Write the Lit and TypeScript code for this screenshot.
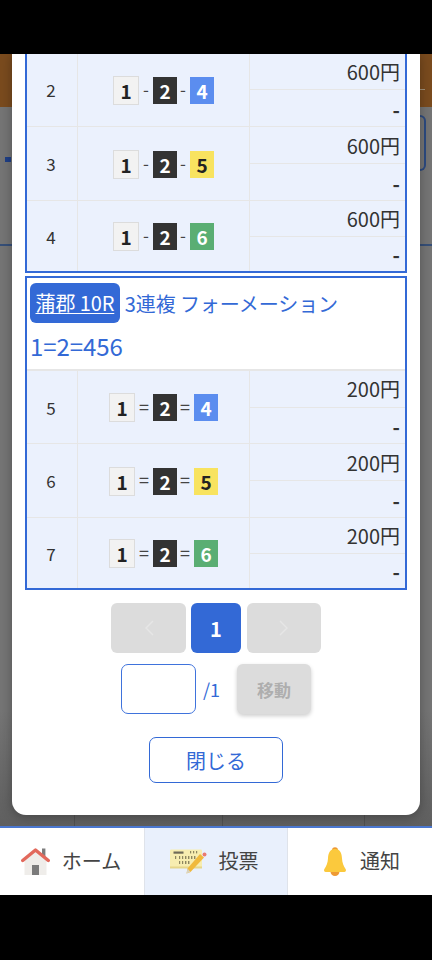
import { LitElement, html, css, svg } from "lit";
import { customElement } from "lit/decorators.js";

type Row = { no: number; nums: number[]; sep: string; amount: string; h: number };

const group1: Row[] = [
  { no: 2, nums: [1, 2, 4], sep: "-", amount: "600円", h: 73 },
  { no: 3, nums: [1, 2, 5], sep: "-", amount: "600円", h: 74 },
  { no: 4, nums: [1, 2, 6], sep: "-", amount: "600円", h: 71 },
];
const group2: Row[] = [
  { no: 5, nums: [1, 2, 4], sep: "=", amount: "200円", h: 73 },
  { no: 6, nums: [1, 2, 5], sep: "=", amount: "200円", h: 74 },
  { no: 7, nums: [1, 2, 6], sep: "=", amount: "200円", h: 71 },
];

const homeIcon = svg`<svg width="29" height="27" viewBox="0 0 29 27">
  <rect x="21" y="0.5" width="3.4" height="9" fill="#7d7d7d"/>
  <path d="M3.5 11 L14.5 3 L25.5 11 V27 H3.5 Z" fill="#efedea"/>
  <path d="M1.7 12.5 L14.5 2 L27.3 12.5" fill="none" stroke="#e2695c" stroke-width="3.4" stroke-linejoin="round" stroke-linecap="round"/>
  <rect x="11" y="17" width="7" height="10" fill="#7b7b7b"/>
</svg>`;

const ticketIcon = svg`<svg width="37" height="25" viewBox="0 0 37 25">
  <rect x="0" y="0.5" width="32" height="18.5" rx="1.2" fill="#f7edb0"/>
  <rect x="0" y="17.5" width="32" height="2" fill="#e6d68a"/>
  <rect x="3.5" y="2.5" width="10" height="2.2" fill="#6f6b58"/>
  <g fill="#8d8660">
    <rect x="5" y="7" width="1.2" height="3"/><rect x="9" y="7" width="1.2" height="3"/><rect x="12" y="7" width="1.2" height="3"/>
    <rect x="15" y="7" width="1.4" height="3"/><rect x="18" y="7" width="1.4" height="3"/><rect x="21" y="7" width="1.4" height="3"/><rect x="24" y="7" width="1.4" height="3"/>
    <rect x="9" y="12" width="1.2" height="3"/><rect x="12" y="12" width="1.2" height="3"/><rect x="15" y="12" width="1.4" height="3"/><rect x="18" y="12" width="1.4" height="3"/>
    <rect x="20" y="2" width="1.2" height="2.4"/><rect x="23" y="2" width="1.2" height="2.4"/><rect x="26" y="2" width="1.2" height="2.4"/>
  </g>
  <path d="M30 5 L34 8.5 L20.5 23 L16.5 24.5 L17.5 19.5 Z" fill="#f0b93c"/>
  <path d="M17.5 19.5 L16.5 24.5 L20.5 23 Z" fill="#d9d3bf"/>
  <circle cx="34.5" cy="5.5" r="2" fill="#ea7a70"/>
</svg>`;

const bellIcon = svg`<svg width="24" height="29" viewBox="0 0 24 29">
  <circle cx="12" cy="3.2" r="3" fill="#ee9a34"/>
  <path d="M7.5 24.5 a4.5 4.5 0 0 0 9 0 Z" fill="#ee9a34"/>
  <path d="M12 2 C6.5 2 5.2 7 5 11.5 C4.8 16 3.4 19 1.4 22 C0.5 23.5 1.2 25 2.8 25 H21.2 C22.8 25 23.5 23.5 22.6 22 C20.6 19 19.2 16 19 11.5 C18.8 7 17.5 2 12 2 Z" fill="#fbc93d"/>
</svg>`;

@customElement("app-root")
export class AppRoot extends LitElement {
  static styles = css`
    :host {
      display: block;
      width: 432px;
      height: 960px;
      background: #000;
      font-family: "Noto Sans CJK JP", "Noto Sans", sans-serif;
      color: #333;
      overflow: hidden;
    }
    .app { height: 960px; display: flex; flex-direction: column; }
    .topgap { height: 54px; flex: none; background: #000; }
    .bottomgap { height: 65px; flex: none; background: #000; }
    .stage { position: relative; height: 772px; flex: none; overflow: hidden; background: #757575; }

    .backdrop { height: 100%; display: flex; flex-direction: column; }
    .band { height: 53px; flex: none; background: #7a4b1e; display: flex; justify-content: flex-end; padding: 35px 7px 0 0; box-sizing: border-box; }
    .band-tick { width: 6px; height: 1px; background: #a09078; }
    .bd-main { height: 129px; flex: none; display: flex; justify-content: space-between; align-items: flex-start; padding: 8px 6px 0 5px; border-bottom: 2px solid #364f78; box-sizing: content-box; }
    .bd-mark { width: 6px; height: 5px; margin-top: 42px; background: #1f3f86; }
    .bd-box { width: 12px; height: 52px; border: 2px solid #2c4a80; border-left: 0; border-radius: 0 6px 6px 0; }
    .bd-fill { flex: 1; display: grid; grid-template-columns: 75px 148px 142px 1fr; background: linear-gradient(#757575 0, #757575 80%, #5f5f5f 100%); }
    .bd-cell { border-right: 1px solid rgba(0, 0, 0, 0.16); }
    .bd-cell:last-child { border-right: 0; }

    .modal {
      position: absolute;
      left: 12px;
      right: 12px;
      top: -1px;
      height: 762px;
      background: #fff;
      border-radius: 0 0 14px 14px;
      box-shadow: 0 2px 12px rgba(0, 0, 0, 0.3);
      padding: 0 13px;
      box-sizing: border-box;
      display: flex;
      flex-direction: column;
    }
    .group { border: 2px solid #3369d6; background: #fff; }
    .group.first { border-top: 0; margin-bottom: 3px; }
    .group.second { margin-bottom: 13px; }
    .head { height: 92px; box-sizing: border-box; padding: 5px 0 0 3px; color: #3369d6; font-size: 20px; border-bottom: 1px solid #e6e6e6; }
    .head-line { display: flex; align-items: center; gap: 5px; height: 41px; white-space: nowrap; }
    .venue { background: #3369d6; color: #fff; border-radius: 6px; height: 40px; line-height: 40px; margin-bottom: 2px; padding: 0 5.5px; letter-spacing: -0.1px; text-decoration: underline; text-underline-offset: 2px; text-decoration-thickness: 1px; }
    .title { letter-spacing: -0.1px; }
    .combo { font-size: 24px; line-height: 44px; letter-spacing: -0.05px; }
    .row { display: grid; grid-template-columns: 50px 1px 171px 1px 1fr; background: #ebf1fd; border-top: 1px solid #e6e6e6; box-sizing: border-box; }
    .group.first .row:first-child { border-top: 0; }
    .vline { background: #e6e6e6; }
    .no { display: flex; align-items: center; justify-content: center; font-size: 17px; color: #333; padding-right: 2px; }
    .nums { display: flex; align-items: center; justify-content: center; padding-top: 1px; }
    .sep { font-size: 17px; color: #444; width: 14px; text-align: center; line-height: 1; margin-top: -4px; }
    .sep.eq { width: 18px; font-size: 18px; }
    .b { width: 24px; height: 27px; display: flex; align-items: center; justify-content: center; font-weight: 700; font-size: 19px; box-sizing: border-box; }
    .b1 { width: 26px; height: 29px; background: #f2f2f2; color: #222; border: 1.5px solid #dcdcdc; }
    .b2 { background: #333; color: #fff; margin-right: -1px; }
    .b4 { background: #5b8def; color: #fff; }
    .b5 { background: #f8e35f; color: #222; }
    .b6 { background: #5aae73; color: #fff; }
    .amounts { display: grid; grid-template-rows: 1fr 1px 1fr; }
    .amt { display: flex; align-items: center; justify-content: flex-end; padding: 1px 5px 0 0; font-size: 20px; color: #333; line-height: 1; }
    .hline { background: #e6e6e6; }
    .dash { font-weight: 700; font-size: 20px; padding-top: 3px; }

    .pager { display: flex; justify-content: center; height: 50px; }
    .pg { width: 75px; height: 50px; border-radius: 6px; background: #dcdcdc; display: flex; align-items: center; justify-content: center; }
    .pg.cur { width: 50px; margin: 0 6px 0 5px; background: #3369d6; color: #fff; font-weight: 700; font-size: 20px; }
    .pg.next { width: 74px; }
    .jump { display: flex; justify-content: center; align-items: center; margin-top: 11px; height: 50px; }
    .inp { width: 75px; height: 50px; border: 1.5px solid #3f73dc; border-radius: 7px; box-sizing: border-box; background: #fff; }
    .of { color: #3369d6; font-size: 18px; width: 41px; padding-left: 7px; box-sizing: border-box; }
    .go { width: 74px; height: 50px; border-radius: 6px; background: #dcdcdc; color: #aeaeae; font-weight: 700; font-size: 17px; display: flex; align-items: center; justify-content: center; box-shadow: 0 2px 4px rgba(0, 0, 0, 0.2); }
    .close { align-self: center; width: 134px; height: 46px; margin-top: 23px; border: 1.5px solid #3369d6; border-radius: 7px; box-sizing: border-box; color: #3369d6; font-size: 20px; display: flex; align-items: center; justify-content: center; background: #fff; }

    .tabs { height: 69px; flex: none; box-sizing: border-box; border-top: 2px solid #4a77d0; background: #fff; display: grid; grid-template-columns: 144px 144px 144px; }
    .tab { display: flex; align-items: center; justify-content: center; gap: 12px; font-size: 20px; color: #444; box-sizing: border-box; }
    .tab span { margin-top: -3px; }
    .tab.home { padding-right: 2px; }
    .tab.on { background: #e9f0fc; border-left: 1px solid #dfe3ea; border-right: 1px solid #dfe3ea; padding-right: 4px; }
    .tab.bell { gap: 13px; padding-left: 3px; }
    .tab svg { display: block; flex: none; }
  `;

  private renderRow(r: Row) {
    return html`<div class="row" style="height:${r.h}px">
      <div class="no">${r.no}</div>
      <div class="vline"></div>
      <div class="nums">
        ${r.nums.map(
          (n, i) => html`${i > 0 ? html`<span class="sep ${r.sep === "=" ? "eq" : ""}">${r.sep}</span>` : ""}
            <span class="b b${n}">${n}</span>`
        )}
      </div>
      <div class="vline"></div>
      <div class="amounts">
        <div class="amt">${r.amount}</div>
        <div class="hline"></div>
        <div class="amt dash">-</div>
      </div>
    </div>`;
  }

  render() {
    return html`<div class="app">
      <div class="topgap"></div>
      <div class="stage">
        <div class="backdrop">
          <div class="band"><span class="band-tick"></span></div>
          <div class="bd-main"><span class="bd-mark"></span><span class="bd-box"></span></div>
          <div class="bd-fill"><span class="bd-cell"></span><span class="bd-cell"></span><span class="bd-cell"></span><span class="bd-cell"></span></div>
        </div>
        <div class="modal">
          <div class="group first">${group1.map((r) => this.renderRow(r))}</div>
          <div class="group second">
            <div class="head">
              <div class="head-line"><span class="venue">蒲郡 10R</span><span class="title">3連複 フォーメーション</span></div>
              <div class="combo">1=2=456</div>
            </div>
            ${group2.map((r) => this.renderRow(r))}
          </div>
          <div class="pager">
            <div class="pg"><svg width="14" height="18" viewBox="0 0 14 18"><path d="M11 2 L4 9 L11 16" fill="none" stroke="#e6e6e6" stroke-width="1.4"/></svg></div>
            <div class="pg cur">1</div>
            <div class="pg next"><svg width="14" height="18" viewBox="0 0 14 18"><path d="M3 2 L10 9 L3 16" fill="none" stroke="#e6e6e6" stroke-width="1.4"/></svg></div>
          </div>
          <div class="jump">
            <div class="inp"></div>
            <div class="of">/1</div>
            <div class="go">移動</div>
          </div>
          <div class="close">閉じる</div>
        </div>
      </div>
      <div class="tabs">
        <div class="tab home">${homeIcon}<span>ホーム</span></div>
        <div class="tab on">${ticketIcon}<span>投票</span></div>
        <div class="tab bell">${bellIcon}<span>通知</span></div>
      </div>
      <div class="bottomgap"></div>
    </div>`;
  }
}
